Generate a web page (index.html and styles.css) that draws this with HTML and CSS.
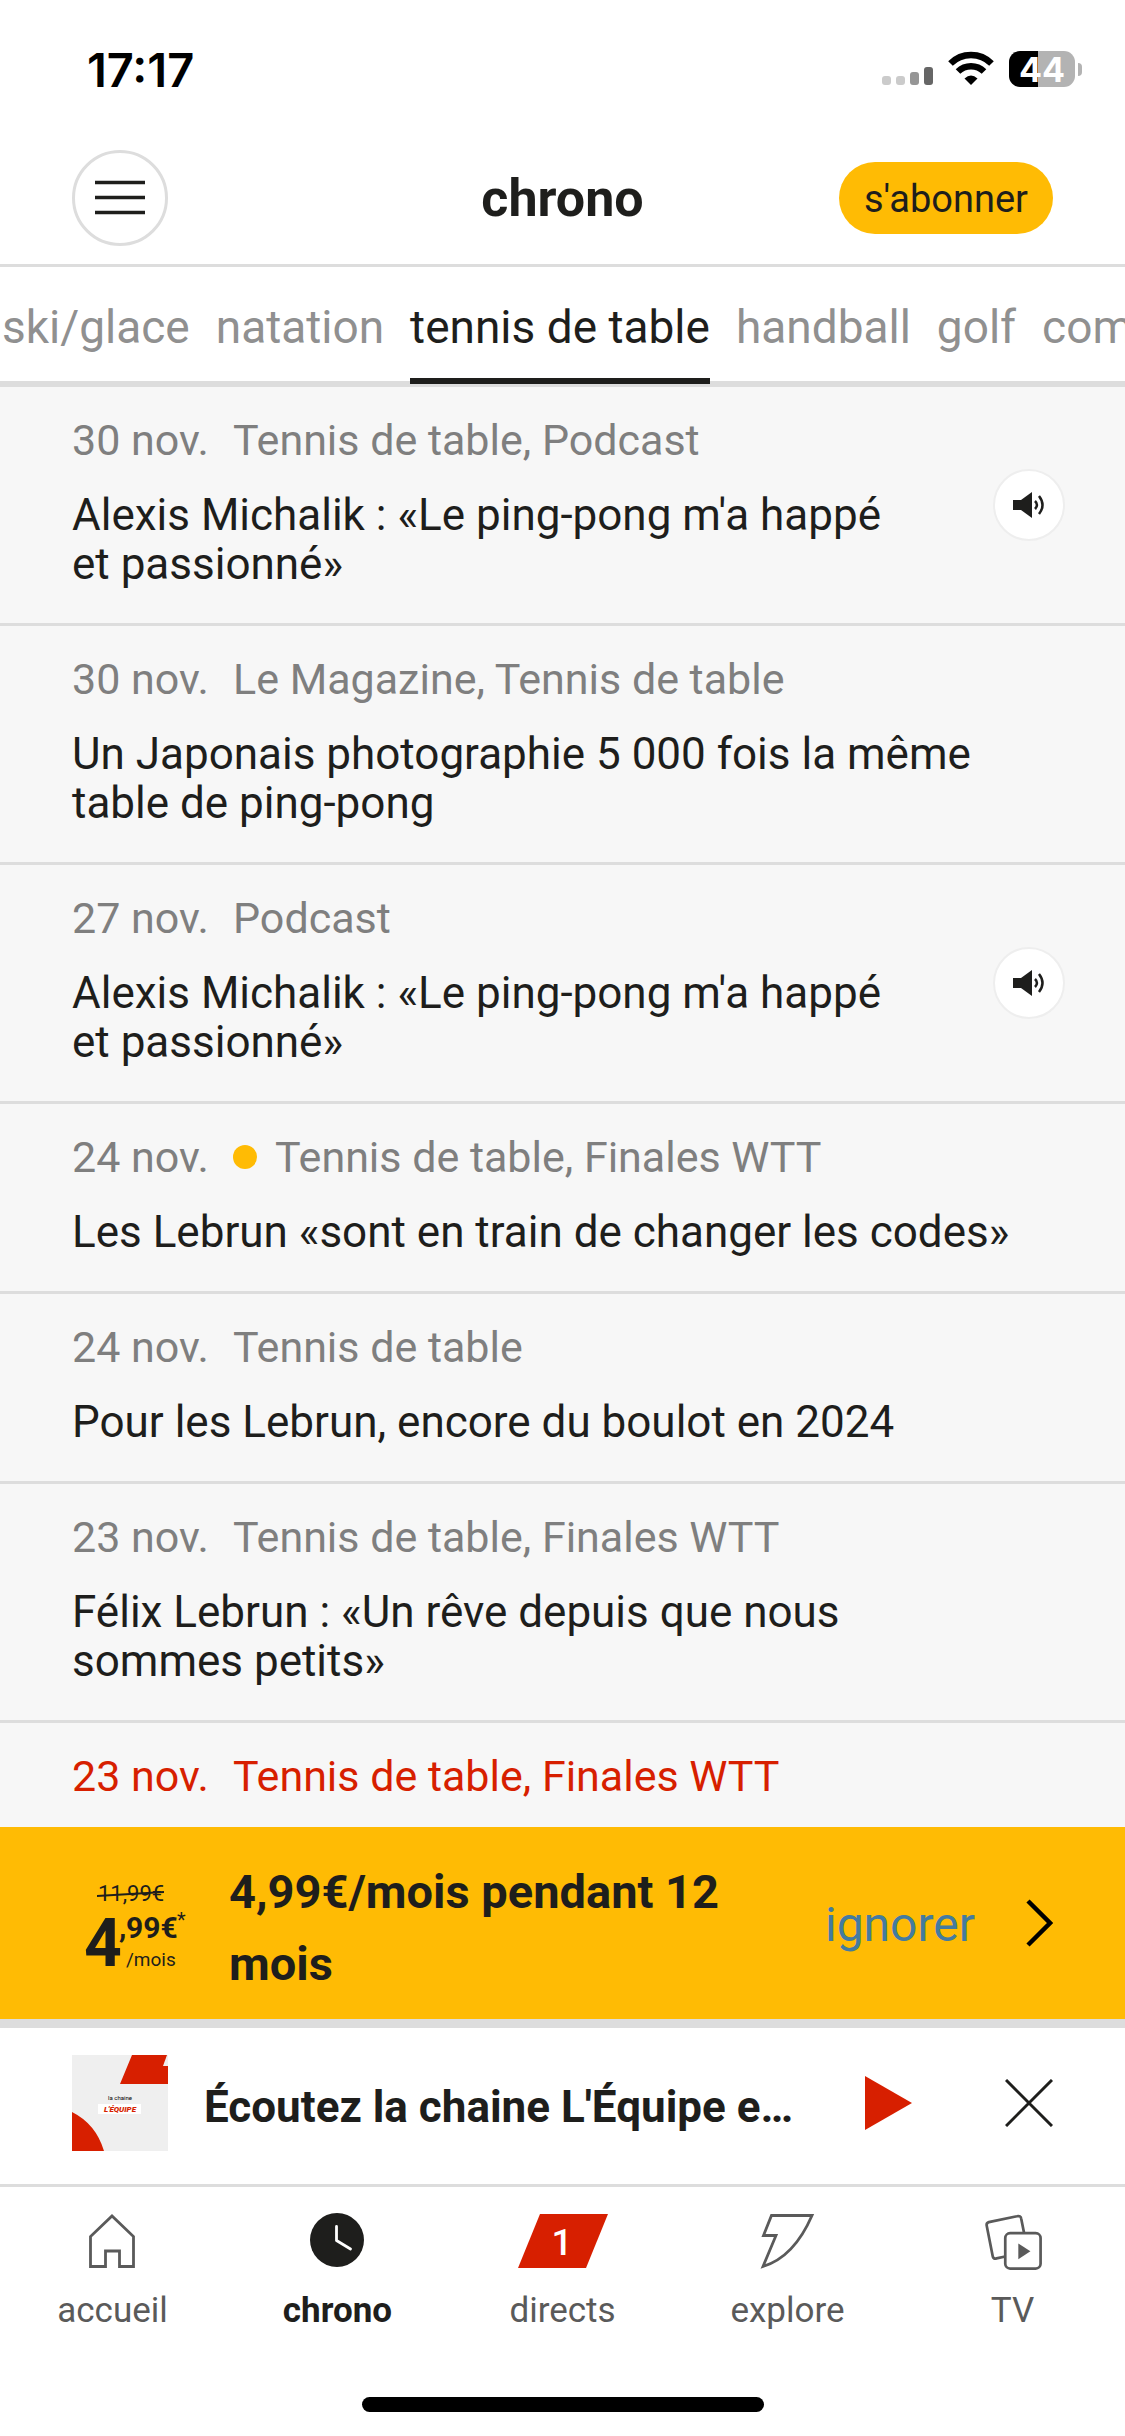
FILE: index.html
```html
<!DOCTYPE html>
<html lang="fr">
<head>
<meta charset="utf-8">
<meta name="viewport" content="width=device-width, initial-scale=1">
<title>chrono</title>
<link rel="stylesheet" href="styles.css">
</head>
<body>
<div class="app">
  <div class="status">
    <span class="clock">17:17</span>
    <span class="indicators">
      <svg width="51" height="36" viewBox="0 0 51 36"><rect y="25" width="9" height="9" rx="3" fill="#cbcbcb"/><rect x="14" y="25" width="9" height="9" rx="3" fill="#cbcbcb"/><rect x="28" y="21" width="9" height="13" rx="3" fill="#969696"/><rect x="42" y="16" width="9" height="18" rx="3" fill="#666"/></svg>
      <svg width="46" height="36" viewBox="0 0 46 36"><g fill="none" stroke="#000" stroke-width="6.5"><path d="M2.500 12.500A29 29 0 0 1 43.500 12.500"/><path d="M10 20.500A18.500 18.500 0 0 1 36 20.500"/></g><path d="M16.500 27.500Q23 21.500 29.500 27.500L23 34Z"/></svg>
      <span class="battery"><span class="level">44</span></span>
    </span>
  </div>
  <header class="header">
    <button class="menu" aria-label="menu"><svg width="50" height="38" viewBox="0 0 50 38"><path d="M0 3.500H50M0 18.500H50M0 33.500H50" stroke="#1e1e1c" stroke-width="3.500"/></svg></button>
    <h1>chrono</h1>
    <button class="subscribe">s'abonner</button>
  </header>
  <nav class="tabs">
    <a href="#">ski/glace</a>
    <a href="#">natation</a>
    <a href="#" class="on">tennis de table</a>
    <a href="#">handball</a>
    <a href="#">golf</a>
    <a href="#">combiné</a>
  </nav>
  <main class="feed">
    <article class="item">
      <div class="body"><p class="meta"><time>30 nov.</time><span>Tennis de table, Podcast</span></p><h2>Alexis Michalik : «Le ping-pong m'a happé et passionné»</h2></div>
      <button class="sound" aria-label="écouter"><svg width="33" height="28" viewBox="0 0 33 28"><path d="M0 9H8L19 1V27L8 19H0Z" fill="#1e1e1c"/><path d="M22 10Q26 14 22 18M26 5Q33 14 26 23" fill="none" stroke="#1e1e1c" stroke-width="2.500"/></svg></button>
    </article>
    <article class="item">
      <div class="body"><p class="meta"><time>30 nov.</time><span>Le Magazine, Tennis de table</span></p><h2>Un Japonais photographie 5 000 fois la même table de ping-pong</h2></div>
    </article>
    <article class="item">
      <div class="body"><p class="meta"><time>27 nov.</time><span>Podcast</span></p><h2>Alexis Michalik : «Le ping-pong m'a happé et passionné»</h2></div>
      <button class="sound" aria-label="écouter"><svg width="33" height="28" viewBox="0 0 33 28"><path d="M0 9H8L19 1V27L8 19H0Z" fill="#1e1e1c"/><path d="M22 10Q26 14 22 18M26 5Q33 14 26 23" fill="none" stroke="#1e1e1c" stroke-width="2.500"/></svg></button>
    </article>
    <article class="item">
      <div class="body"><p class="meta"><time>24 nov.</time><i class="dot"></i><span>Tennis de table, Finales WTT</span></p><h2>Les Lebrun «sont en train de changer les codes»</h2></div>
    </article>
    <article class="item">
      <div class="body"><p class="meta"><time>24 nov.</time><span>Tennis de table</span></p><h2>Pour les Lebrun, encore du boulot en 2024</h2></div>
    </article>
    <article class="item">
      <div class="body"><p class="meta"><time>23 nov.</time><span>Tennis de table, Finales WTT</span></p><h2>Félix Lebrun : «Un rêve depuis que nous<br>sommes petits»</h2></div>
    </article>
    <article class="item">
      <div class="body"><p class="meta live"><time>23 nov.</time><span>Tennis de table, Finales WTT</span></p></div>
    </article>
  </main>
  <div class="dock">
    <section class="promo">
      <svg class="price" width="96" height="96" viewBox="0 0 96 96"><g fill="#1e1e1c"><text x="10" y="26" font-size="22">11,99€</text><path d="M9 20L76 16V18L9 22Z"/><text x="-4" y="91" font-size="66" font-weight="700">4</text><text x="31" y="63" font-size="30" font-weight="700">,</text><text x="38" y="63" font-size="30" font-weight="700">99€</text><text x="89" y="52" font-size="20">*</text><text x="38" y="91" font-size="19">/mois</text></g></svg>
      <p class="offer">4,99€/mois pendant 12 mois</p>
      <a class="ignore" href="#">ignorer</a>
      <button class="plain" aria-label="voir l'offre"><svg width="27" height="48" viewBox="0 0 27 48"><path d="M2 2L24 24L2 46" fill="none" stroke="#000" stroke-width="4.500"/></svg></button>
    </section>
    <section class="player">
      <svg class="thumb" width="96" height="96" viewBox="0 0 96 96"><path fill="#efefef" d="M0 0H96V96H0Z"/><path fill="#d71f00" d="M60 0H96V29H48ZM0 57Q24 69 32 96H0Z"/><path fill="#efefef" d="M95 0H96V11H91Z"/><path fill="#fff" d="M26 49H69V59H26Z"/><text x="48" y="45" font-size="6" text-anchor="middle">la chaine</text><text x="48" y="57" font-size="8" font-weight="900" font-style="italic" fill="#d71f00" text-anchor="middle">L'ÉQUIPE</text></svg>
      <p class="track">Écoutez la chaine L'Équipe en direct</p>
      <button class="plain play" aria-label="lecture"><svg width="47" height="54" viewBox="0 0 47 54"><path d="M0 0L47 27L0 54Z" fill="#d71f00"/></svg></button>
      <button class="plain" aria-label="fermer"><svg width="48" height="48" viewBox="0 0 48 48"><path d="M1 1L47 47M47 1L1 47" stroke="#1e1e1c" stroke-width="3"/></svg></button>
    </section>
    <nav class="bar">
      <a href="#"><svg width="60" height="60" viewBox="0 0 60 60"><path d="M7.500 56.500V26.500L29 6L50.500 26.500V56.500H36.500V41H22.500V56.500Z" fill="none" stroke="#5a5a5a" stroke-width="2.800"/></svg>accueil</a>
      <a href="#" class="on"><svg width="60" height="60" viewBox="0 0 60 60"><circle cx="29" cy="30" r="27" fill="#1e1e1c"/><path d="M28.500 16.500V30.500L42.500 39" fill="none" stroke="#fff" stroke-width="2.800" stroke-linecap="round" stroke-linejoin="round"/></svg>chrono</a>
      <a href="#"><svg width="90" height="60" viewBox="0 0 90 60"><path d="M22 4H90L68 58H0Z" fill="#d71f00"/><text x="44" y="45" font-size="37" font-weight="500" fill="#fff" text-anchor="middle">1</text></svg>directs</a>
      <a href="#"><svg width="60" height="60" viewBox="0 0 60 60"><path d="M13.500 5.500H54Q36 47 5 56.500L18 25.500H5.500Z" fill="none" stroke="#5a5a5a" stroke-width="2.800"/></svg>explore</a>
      <a href="#"><svg width="60" height="62" viewBox="0 0 60 62"><g fill="none" stroke="#5a5a5a" stroke-width="2.800"><path d="M22 48L13 50Q9.500 51 9 47.500L3 17Q2 13.500 5 12.500L34 6.500Q38 5.500 38.500 9L41.500 24"/><rect x="22" y="24" width="36.500" height="36.500" rx="5"/></g><path d="M35.500 34.500L48 42.500L35.500 51Z" fill="#5a5a5a"/></svg>TV</a>
    </nav>
    <div class="home"></div>
  </div>
</div>
</body>
</html>
```
FILE: styles.css
```css
* { box-sizing: border-box; }
body, h1, h2, p { margin: 0; }
body { background: #fff; color: #1e1e1c; font-family: Roboto, "Liberation Sans", sans-serif; font-size: 43px; }
a { color: inherit; text-decoration: none; }
button { font: inherit; color: inherit; border: 0; background: none; padding: 0; }
svg { display: block; flex: none; }
.app { display: flex; flex-direction: column; height: 100vh; overflow: hidden; }

.status { display: flex; justify-content: space-between; align-items: center; padding: 0 43px 0 87px; height: 138px; flex: none; }
.clock { font: 600 47px Inter, sans-serif; color: #000; }
.indicators { display: flex; align-items: center; gap: 15px; }
.battery { position: relative; width: 66px; height: 36px; margin-right: 7px; }
.level { display: flex; justify-content: center; align-items: center; height: 36px; border-radius: 11px; background: linear-gradient(90deg, #000 29px, #b3b3b3 29px); color: #fff; font: 700 34px Inter, sans-serif; }
.battery::after { content: ""; position: absolute; right: -7px; top: 12px; width: 4px; height: 13px; border-radius: 0 4px 4px 0; background: #b3b3b3; }

.header { display: grid; grid-template-columns: 1fr auto 1fr; align-items: center; padding: 0 72px 6px; height: 129px; border-bottom: 3px solid #ddd; flex: none; }
.header h1 { font-size: 52px; font-weight: 700; }
.menu { width: 96px; height: 96px; border: 3px solid #ddd; border-radius: 50%; display: flex; align-items: center; justify-content: center; }
.subscribe { justify-self: end; height: 72px; padding: 2px 25px 0; border-radius: 36px; background: #ffbb04; font-size: 38px; }

.tabs { display: flex; gap: 26px; height: 120px; padding-left: 2px; border-bottom: 6px solid #ddd; white-space: nowrap; flex: none; color: #909090; font-size: 46px; line-height: 120px; }
.tabs .on { color: #1e1e1c; height: 117px; border-bottom: 6px solid #1e1e1c; }

.feed { flex: 1 1 0; min-height: 0; overflow: hidden; background: #f7f7f7; }
.item { display: flex; align-items: center; padding: 0 60px 0 72px; border-bottom: 3px solid #ddd; }
.body { flex: 1; min-width: 0; padding: 26px 40px 34px 0; }
.meta { display: flex; align-items: center; line-height: 54px; color: #7f7f7f; }
.meta time { width: 161px; }
.meta.live { color: #d71f00; }
.dot { width: 24px; height: 24px; margin-right: 18px; border-radius: 50%; background: #ffbb04; }
.item h2 { margin-top: 24px; font-size: 44px; font-weight: 400; line-height: 49px; }
.sound { flex: none; width: 72px; height: 72px; margin-left: 30px; border: 2px solid #eee; border-radius: 50%; background: #fff; display: flex; align-items: center; justify-content: center; }

.dock { flex: none; background: #fff; }
.promo { display: flex; align-items: center; height: 201px; padding: 0 72px 0 88px; background: #ffbb04; border-bottom: 9px solid #ddd; }
.price { overflow: visible; }
.offer { flex: 1; margin-left: 45px; padding: 10px 80px 0 0; font-size: 47px; font-weight: 700; line-height: 72px; }
.ignore { color: #447b9f; font-size: 48px; margin-right: 51px; padding-top: 2px; }
.player { display: flex; align-items: center; height: 159px; padding: 0 72px 6px; border-bottom: 3px solid #ddd; }
.track { flex: 1; min-width: 0; margin: 0 60px 0 36px; padding-top: 8px; font-size: 44px; font-weight: 700; white-space: nowrap; overflow: hidden; text-overflow: ellipsis; }
.play { margin-right: 93px; }
.bar { display: grid; grid-template-columns: repeat(5, 1fr); padding-top: 23px; color: #5a5a5a; font-size: 35px; line-height: 40px; }
.bar a { display: flex; flex-direction: column; align-items: center; gap: 21px; }
.bar svg { height: 60px; }
.bar .on { color: #1e1e1c; font-weight: 700; }
.home { width: 402px; height: 15px; margin: 66px auto 24px; border-radius: 8px; background: #000; }
```
